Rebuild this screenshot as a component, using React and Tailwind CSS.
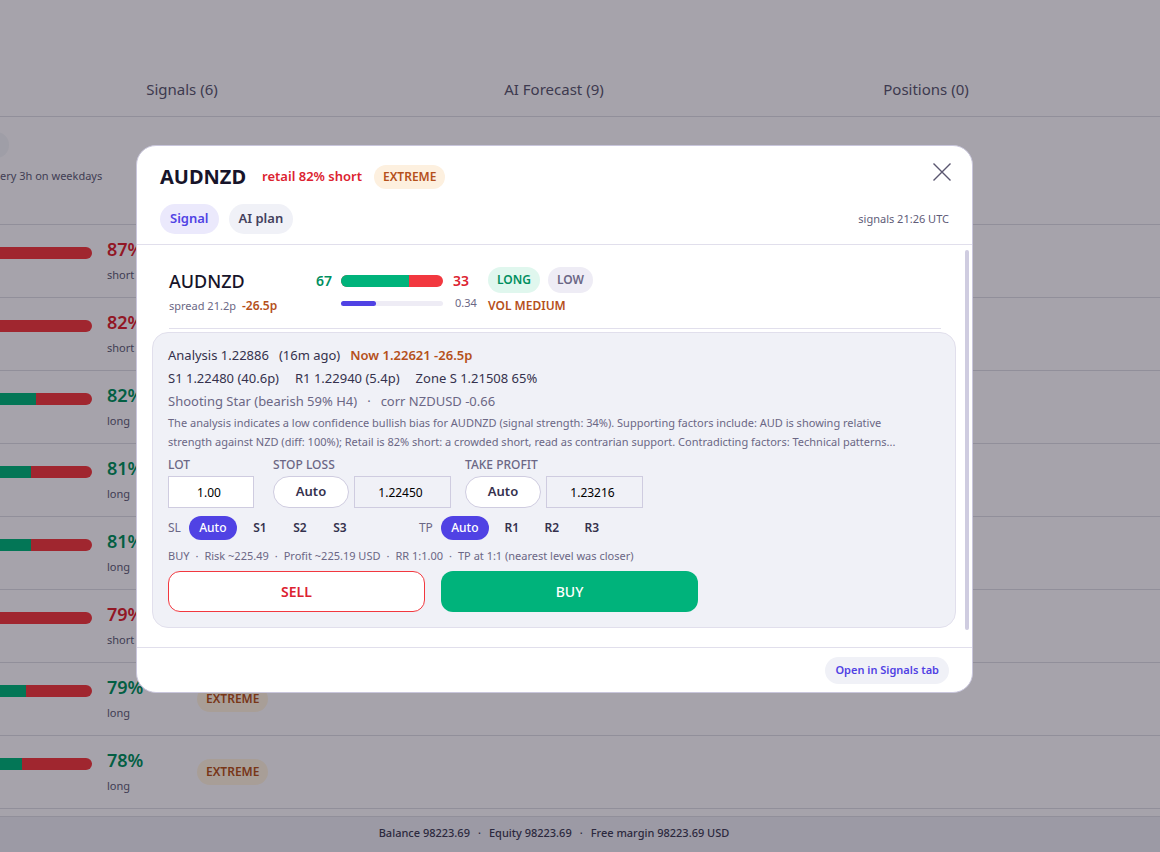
import { useState } from "react";
import clsx from "clsx";

const rows = [
  { pct: 87, side: "short", long: 0 },
  { pct: 82, side: "short", long: 0 },
  { pct: 82, side: "long", long: 39 },
  { pct: 81, side: "long", long: 34 },
  { pct: 81, side: "long", long: 34 },
  { pct: 79, side: "short", long: 0 },
  { pct: 79, side: "long", long: 28, extreme: true },
  { pct: 78, side: "long", long: 24, extreme: true },
];

function Badge({ className, children }) {
  return (
    <span
      className={clsx(
        "flex items-center rounded-full px-[9px] text-[12px] font-semibold",
        className
      )}
    >
      {children}
    </span>
  );
}

function RetailRow({ row }) {
  return (
    <li className="flex h-[73px] shrink-0 items-start border-b border-[#dad9e4]">
      <div className="mt-[22px] flex h-3 w-[92px] overflow-hidden rounded-r-full bg-[#f2383f]">
        <div className="bg-[#00b37b]" style={{ width: `${row.long}%` }} />
      </div>
      <div className="ml-[15px] w-[90px] pt-3">
        <p
          className={clsx(
            "text-[18px] leading-6 font-semibold",
            row.side === "long" ? "text-[#008f5f]" : "text-[#dc2230]"
          )}
        >
          {row.pct}%
        </p>
        <p className="text-[11px] leading-[28px] text-[#605c78]">{row.side}</p>
      </div>
      {row.extreme && (
        <Badge className="mt-[23px] h-[26px] bg-[#fdf0df] text-[#b5501b]">
          EXTREME
        </Badge>
      )}
    </li>
  );
}

function Page() {
  return (
    <div className="flex h-screen flex-col overflow-hidden bg-[#fbf8fe]">
      <nav className="border-b border-[#dad9e4] pt-[63px]">
        <div className="-ml-1 grid grid-cols-3 pr-12 text-[15px] text-[#5a5670]">
          <a href="#signals" className="py-[14px] text-center leading-[25px]">
            Signals (6)
          </a>
          <a href="#forecast" className="py-[14px] text-center leading-[25px]">
            AI Forecast (9)
          </a>
          <a href="#positions" className="py-[14px] text-center leading-[25px]">
            Positions (0)
          </a>
        </div>
      </nav>

      <div className="h-[108px] shrink-0 border-b border-[#dad9e4] pt-[15px]">
        <div className="-ml-4 h-[26px] w-[25px] rounded-full bg-[#f0f0f7]" />
        <p className="mt-2 text-[11px] leading-5 text-[#605c78]">
          ery 3h on weekdays
        </p>
      </div>

      <ul className="min-h-0 flex-1 overflow-hidden">
        {rows.map((row, i) => (
          <RetailRow key={i} row={row} />
        ))}
      </ul>

      <footer className="border-t border-[#dad9e4] bg-[#eceaf5]">
        <p className="-ml-1 flex h-[35px] justify-center gap-2 pr-12 text-[11px] leading-[32px] font-medium text-[#403c57]">
          <span>Balance 98223.69</span>
          <span>·</span>
          <span>Equity 98223.69</span>
          <span>·</span>
          <span>Free margin 98223.69 USD</span>
        </p>
      </footer>
    </div>
  );
}

function PriceField({ id, label, value }) {
  return (
    <div>
      <label
        htmlFor={id}
        className="block text-[12px] leading-[22px] font-medium text-[#6b6785]"
      >
        {label}
      </label>
      <div className="flex gap-[5px]">
        <button className="h-8 w-[76px] rounded-2xl border border-[#cfcce0] bg-white text-[13px] font-semibold text-[#35314d]">
          Auto
        </button>
        <input
          id={id}
          defaultValue={value}
          className="h-8 w-[97px] border border-[#cfcce0] pt-[2px] pr-1 text-center text-[12px] text-black"
        />
      </div>
    </div>
  );
}

function Levels({ label, options }) {
  const [selected, setSelected] = useState("Auto");

  return (
    <div className="flex items-center">
      <span className="mr-2 text-[12px] text-[#6b6785]">{label}</span>
      <div className="flex gap-[6px]">
        {options.map((option) => (
          <button
            key={option}
            onClick={() => setSelected(option)}
            className={clsx(
              "h-6 rounded-full text-[12px]",
              option === selected
                ? "bg-[#5042e4] font-medium text-white"
                : "font-semibold text-[#35314d]",
              option === "Auto" ? "w-12" : "w-[34px]"
            )}
          >
            {option}
          </button>
        ))}
      </div>
    </div>
  );
}

function SignalSummary() {
  return (
    <div className="ml-[17px] mr-[15px] flex h-[84px] items-start border-b border-[#e1dfec] pt-[22px]">
      <div className="w-[147px]">
        <h3 className="text-[18px] leading-7 font-medium text-[#17142a]">
          AUDNZD
        </h3>
        <p className="text-[11px] leading-[22px] text-[#6b6785]">
          spread 21.2p
          <span className="ml-[6px] text-[12px] font-semibold text-[#b5501b]">
            -26.5p
          </span>
        </p>
      </div>

      <div className="flex w-[172px] flex-col">
        <div className="flex h-7 items-center text-[14px] font-semibold">
          <span className="w-[25px] text-[#008f5f]">67</span>
          <div className="flex h-3 w-[102px] overflow-hidden rounded-full bg-[#f2383f]">
            <div className="w-[67%] bg-[#00b37b]" />
          </div>
          <span className="ml-[10px] text-[#dc2230]">33</span>
        </div>
        <div className="flex h-[18px] items-center text-[11px] text-[#6b6785]">
          <div className="ml-[25px] h-[5px] w-[102px] rounded-full bg-[#eeecf5]">
            <div className="h-full w-[34%] rounded-full bg-[#5042e4]" />
          </div>
          <span className="ml-3">0.34</span>
        </div>
      </div>

      <div>
        <div className="flex gap-2">
          <Badge className="h-[26px] bg-[#e0f7ee] text-[#008f5f]">LONG</Badge>
          <Badge className="h-[26px] bg-[#eeecf5] text-[#6b6785]">LOW</Badge>
        </div>
        <p className="text-[12px] leading-[26px] font-semibold text-[#b5501b]">
          VOL MEDIUM
        </p>
      </div>
    </div>
  );
}

function AnalysisPanel() {
  return (
    <section className="mt-[3px] rounded-2xl border border-[#e1dfec] bg-[#f0f1f7] px-[15px] pt-[11px] pb-[15px]">
      <div className="text-[13px] leading-[23px] text-[#35314d]">
        <p className="flex gap-[10px]">
          <span>Analysis 1.22886</span>
          <span>(16m ago)</span>
          <span className="font-semibold text-[#b5501b]">
            Now 1.22621 -26.5p
          </span>
        </p>
        <p className="flex gap-4">
          <span>S1 1.22480 (40.6p)</span>
          <span>R1 1.22940 (5.4p)</span>
          <span>Zone S 1.21508 65%</span>
        </p>
        <p className="flex gap-[10px] text-[#6b6785]">
          <span>Shooting Star (bearish 59% H4)</span>
          <span>·</span>
          <span>corr NZDUSD -0.66</span>
        </p>
      </div>
      <p className="text-[11px] leading-[19px] text-[#6b6785]">
        The analysis indicates a low confidence bullish bias for AUDNZD (signal
        strength: 34%). Supporting factors include: AUD is showing relative
        <br />
        strength against NZD (diff: 100%); Retail is 82% short: a crowded short,
        read as contrarian support. Contradicting factors: Technical patterns...
      </p>

      <div className="mt-[3px] flex">
        <div className="mr-[19px]">
          <label
            htmlFor="lot"
            className="block text-[12px] leading-[22px] font-medium text-[#6b6785]"
          >
            LOT
          </label>
          <input
            id="lot"
            defaultValue="1.00"
            className="h-8 w-[86px] border border-[#cfcce0] bg-white pt-[2px] pr-1 text-center text-[12px] text-black"
          />
        </div>
        <div className="flex gap-[14px]">
          <PriceField id="sl" label="STOP LOSS" value="1.22450" />
          <PriceField id="tp" label="TAKE PROFIT" value="1.23216" />
        </div>
      </div>

      <div className="mt-2 flex gap-[62px]">
        <Levels label="SL" options={["Auto", "S1", "S2", "S3"]} />
        <Levels label="TP" options={["Auto", "R1", "R2", "R3"]} />
      </div>

      <p className="mt-1 flex gap-[6px] text-[11px] leading-[23px] text-[#6b6785]">
        <span>BUY</span>
        <span>·</span>
        <span>Risk ~225.49</span>
        <span>·</span>
        <span>Profit ~225.19 USD</span>
        <span>·</span>
        <span>RR 1:1.00</span>
        <span>·</span>
        <span>TP at 1:1 (nearest level was closer)</span>
      </p>

      <div className="mt-1 grid max-w-[530px] grid-cols-2 gap-4 text-[14px]">
        <button className="h-[41px] rounded-xl border border-[#f2383f] bg-white font-semibold text-[#dc2230]">
          SELL
        </button>
        <button className="h-[41px] rounded-xl bg-[#00b37b] font-medium text-white">
          BUY
        </button>
      </div>
    </section>
  );
}

function SignalDialog() {
  return (
    <div
      role="dialog"
      aria-label="AUDNZD"
      className="w-full max-w-[837px] overflow-hidden rounded-[20px] border border-[#c9c6dc] bg-white"
    >
      <header className="flex justify-between border-b border-[#e1dfec] pt-4 pr-[23px] pb-[10px] pl-[23px]">
        <div>
          <div className="flex h-[30px] items-center">
            <h2 className="text-[20px] font-bold text-[#17142a]">AUDNZD</h2>
            <span className="ml-4 text-[13px] font-semibold text-[#dc2230]">
              retail 82% short
            </span>
            <Badge className="ml-3 h-6 bg-[#fdf0df] text-[#b5501b]">
              EXTREME
            </Badge>
          </div>
          <div className="mt-3 flex gap-[10px] text-[13px] font-semibold">
            <button className="h-[30px] rounded-full bg-[#ebe9fc] px-[10px] text-[#5042e4]">
              Signal
            </button>
            <button className="h-[30px] rounded-full bg-[#f0f1f7] px-[10px] text-[#44405c]">
              AI plan
            </button>
          </div>
        </div>
        <div className="flex flex-col items-end justify-between">
          <button aria-label="Close" className="-mr-[3px] p-[1px]">
            <svg
              width="18"
              height="18"
              viewBox="0 0 18 18"
              fill="none"
              stroke="#5a5670"
              strokeWidth="1.4"
            >
              <path d="M0.5 0.5 L17.5 17.5 M17.5 0.5 L0.5 17.5" />
            </svg>
          </button>
          <span className="text-[11px] leading-[30px] text-[#605c78]">
            signals 21:26 UTC
          </span>
        </div>
      </header>

      <div className="flex">
        <div className="min-w-0 flex-1 pr-[9px] pb-[19px] pl-[15px]">
          <SignalSummary />
          <AnalysisPanel />
        </div>
        <div className="mt-[5px] mr-[3px] mb-[17px] w-1 rounded-full bg-[#cfcce0]" />
      </div>

      <footer className="flex justify-end border-t border-[#e1dfec] pt-[9px] pr-[23px] pb-2">
        <button className="h-[27px] rounded-full bg-[#f0f1f7] px-[10px] text-[11px] font-semibold text-[#5042e4]">
          Open in Signals tab
        </button>
      </footer>
    </div>
  );
}

export default function App() {
  return (
    <div className="relative font-['Noto_Sans','Open_Sans',sans-serif]">
      <Page />
      <div className="absolute inset-0 bg-[#0a0612]/35">
        <div className="-ml-1 flex h-full items-center justify-center pr-[47px] pb-[15px]">
          <SignalDialog />
        </div>
      </div>
    </div>
  );
}
